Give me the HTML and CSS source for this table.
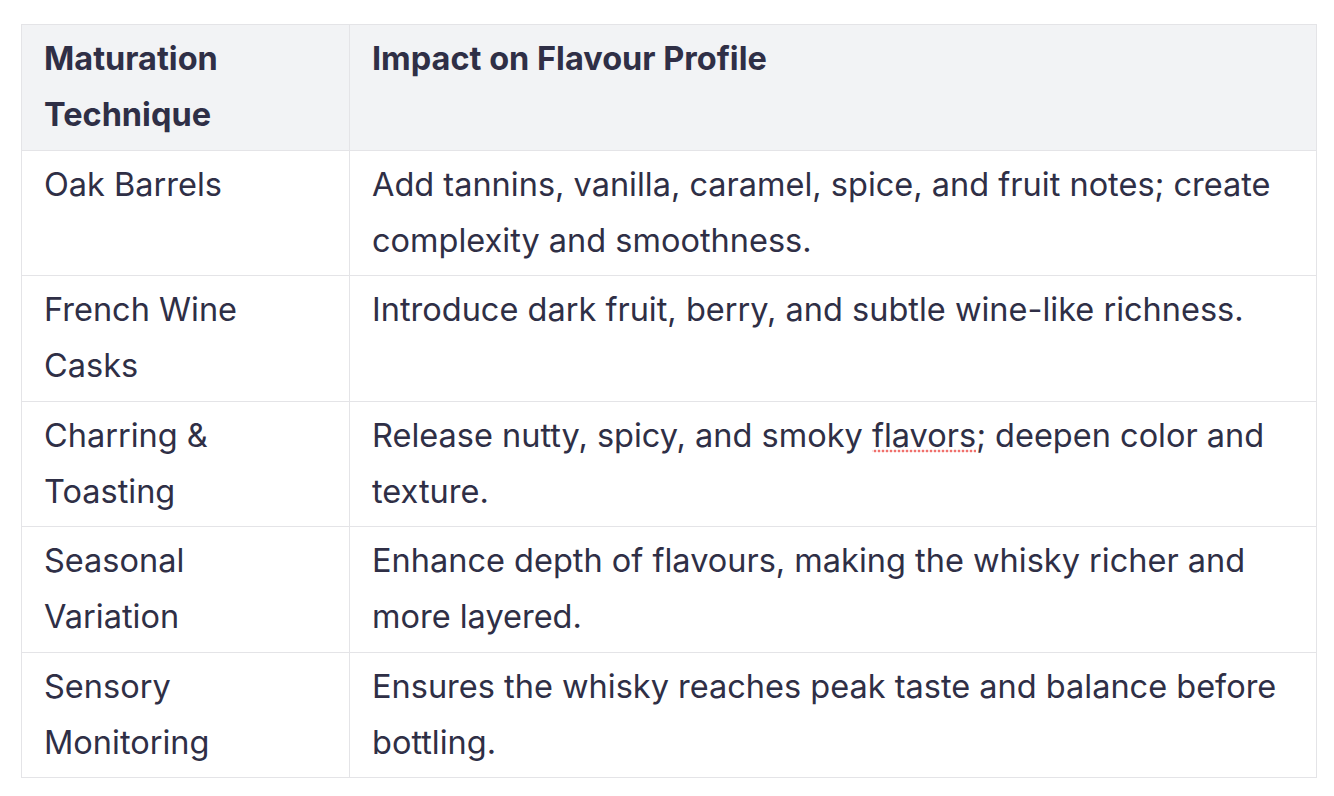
FILE: index.html
```html
<!DOCTYPE html>
<html lang="en">
<head>
<meta charset="utf-8">
<title>Maturation Techniques</title>
<link rel="stylesheet" href="styles.css">
</head>
<body>
<table class="tbl">
  <thead>
    <tr>
      <th class="col-a">Maturation Technique</th>
      <th>Impact on Flavour Profile</th>
    </tr>
  </thead>
  <tbody>
    <tr>
      <td>Oak Barrels</td>
      <td>Add tannins, vanilla, caramel, spice, and fruit notes; create complexity and smoothness.</td>
    </tr>
    <tr>
      <td>French Wine Casks</td>
      <td>Introduce dark fruit, berry, and subtle wine-like richness.</td>
    </tr>
    <tr>
      <td>Charring &amp; Toasting</td>
      <td>Release nutty, spicy, and smoky <span class="spell">flavors</span>; deepen color and texture.</td>
    </tr>
    <tr>
      <td>Seasonal Variation</td>
      <td>Enhance depth of flavours, making the whisky richer and more layered.</td>
    </tr>
    <tr>
      <td>Sensory Monitoring</td>
      <td>Ensures the whisky reaches peak taste and balance before bottling.</td>
    </tr>
  </tbody>
</table>
</body>
</html>
```
FILE: styles.css
```css
html, body {
  margin: 0;
  padding: 0;
  background: #ffffff;
}
body {
  padding: 24px 18px 0 21px;
  font-family: Inter, "Noto Sans", sans-serif;
  color: #2f2f46;
}
.tbl {
  width: 1296px;
  border-collapse: collapse;
  font-size: 32.5px;
  line-height: 56px;
}
.tbl th, .tbl td {
  border: 1px solid #e4e4e7;
  padding: 6px 22px 6.5px 22px;
  text-align: left;
  vertical-align: top;
}
.tbl th {
  background: #f2f3f5;
  font-weight: 700;
}
.col-a {
  width: 283px;
}
.spell {
  background-image: radial-gradient(circle, #f0706c 1.1px, transparent 1.7px);
  background-repeat: repeat-x;
  background-size: 4px 4px;
  background-position: 1px 33px;
  padding-bottom: 4px;
}
```
